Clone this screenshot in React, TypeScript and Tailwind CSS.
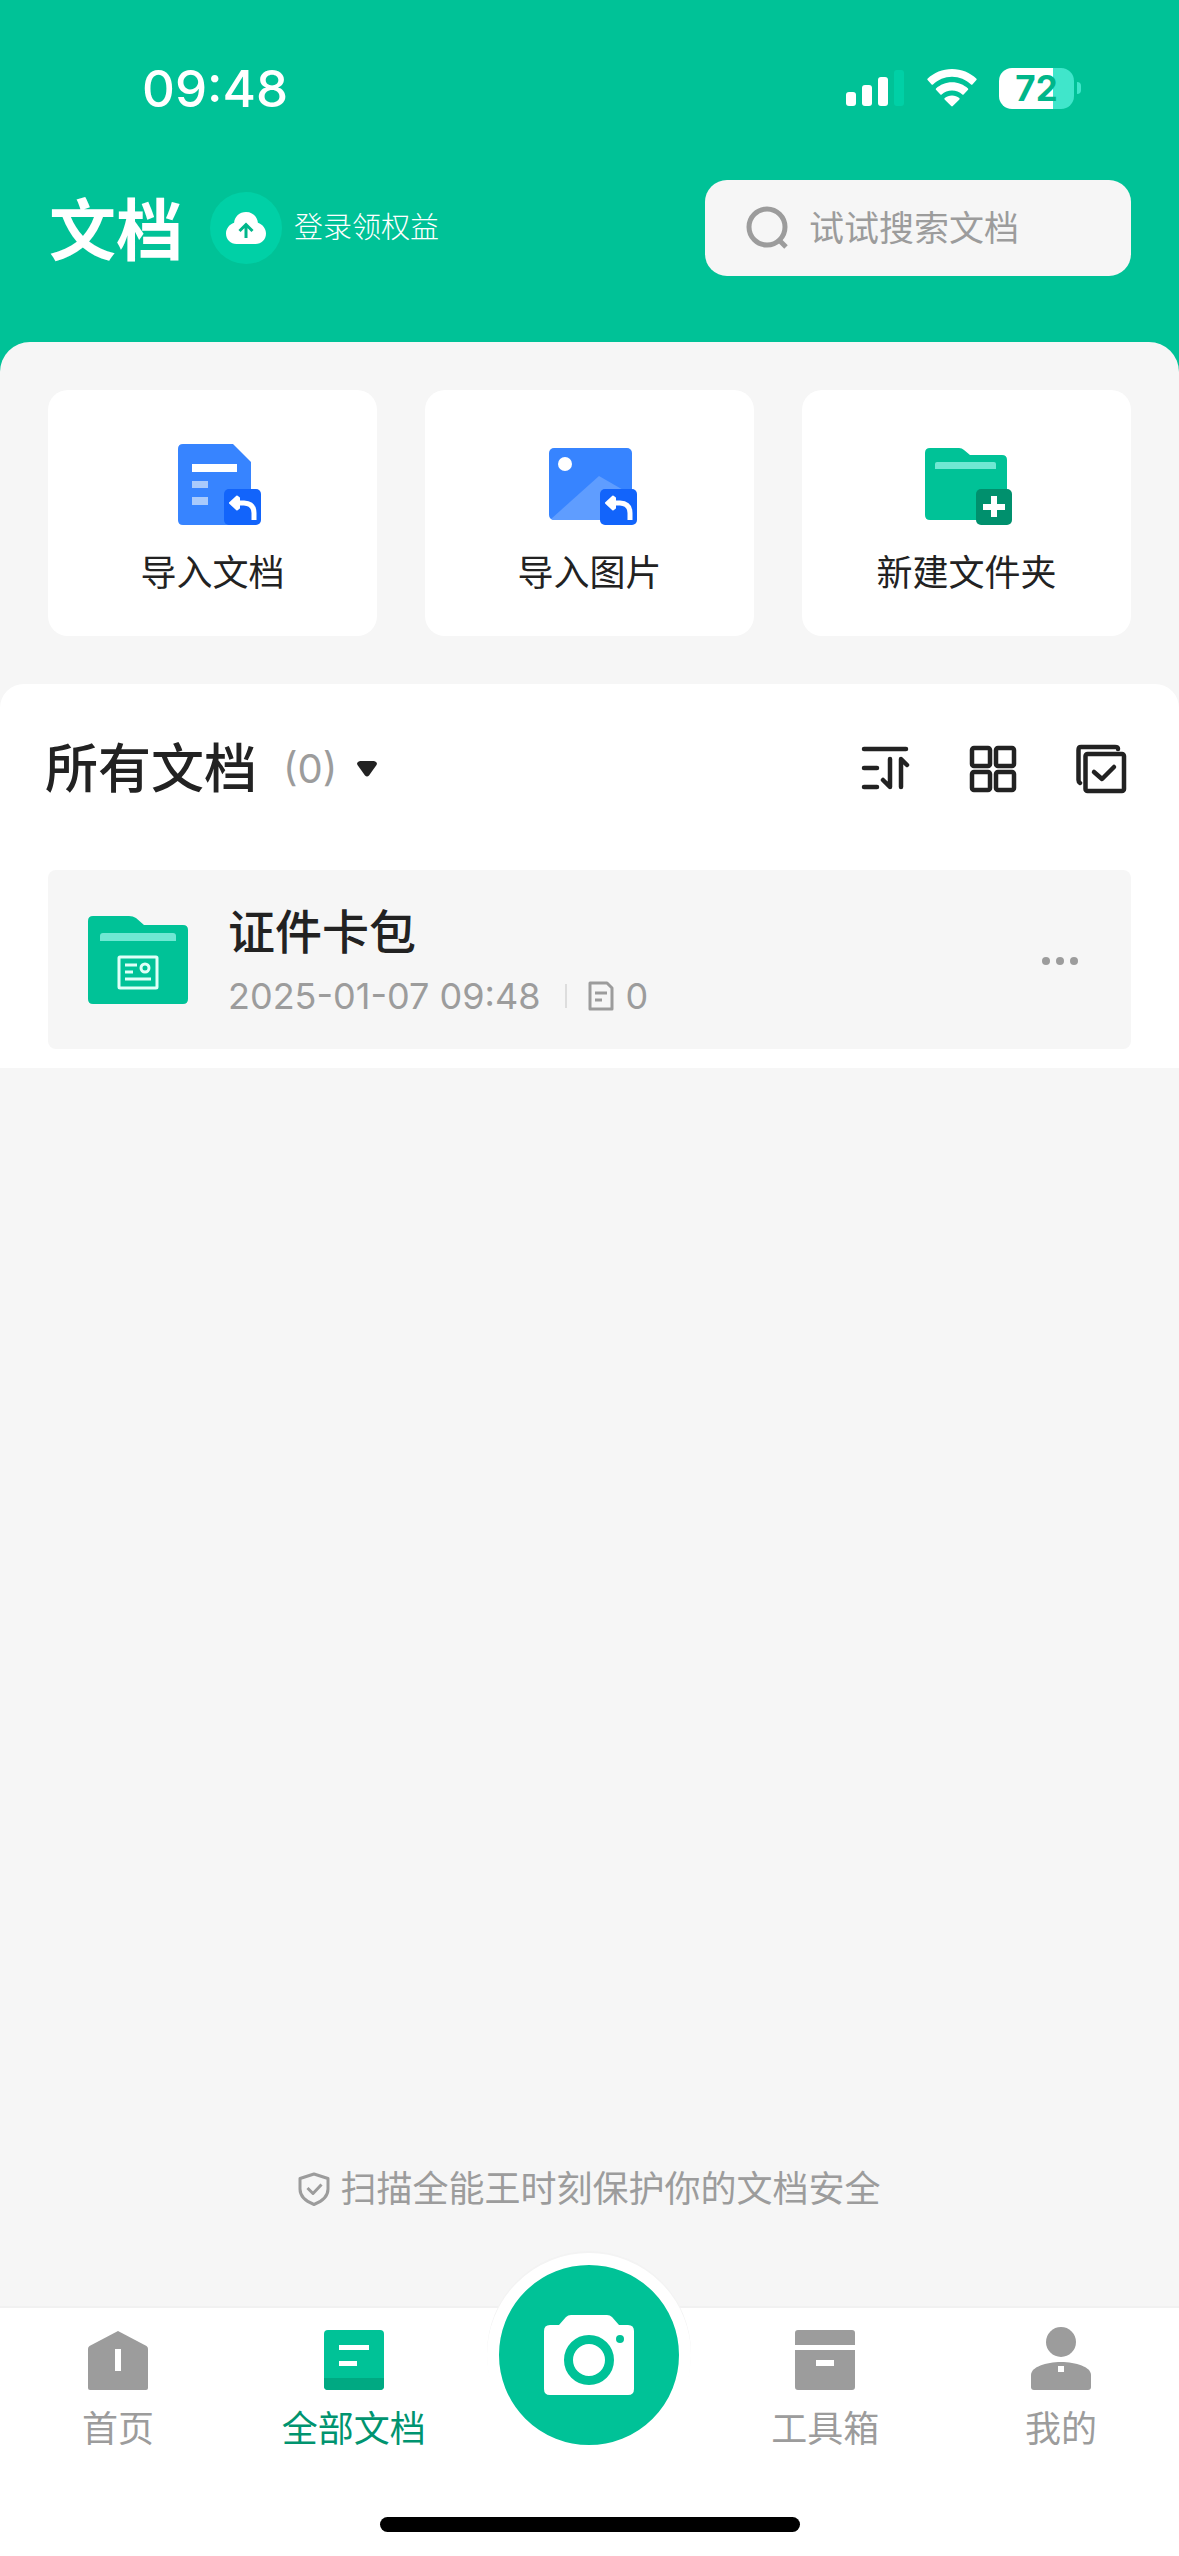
import { ReactNode } from "react";

const StatusBar = () => {
  return (
    <div className="flex h-44 items-center justify-between pl-[142px] pr-[98px]">
      <div className="text-[51px] leading-none font-medium text-white">09:48</div>
      <div className="flex items-center">
        <svg className="h-10 w-[60px]" viewBox="0 0 60 40" fill="#fff">
          <rect x="0" y="24" width="10" height="14" rx="3" />
          <rect x="16" y="17" width="10" height="21" rx="3" />
          <rect x="32" y="9" width="10" height="29" rx="3" />
          <rect x="48" y="2" width="10" height="36" rx="3" fill="#00d0a6" />
        </svg>
        <svg className="ml-[21px] h-10 w-[50px]" viewBox="0 0 50 40" fill="#fff">
          <path d="M25 1C15.500 1 6.900 4.700 .5 10.700Q0 11.400 .6 12L4.600 16.400Q5.300 17 6 16.400C11 11.700 17.700 8.800 25 8.800S39 11.700 44 16.400Q44.700 17 45.400 16.400L49.400 12Q50 11.400 49.500 10.700C43.100 4.700 34.500 1 25 1Z" />
          <path d="M25 14.300C18.800 14.300 13.200 16.700 9 20.500Q8.400 21.200 9 21.800L13.400 26.400Q14 27 14.700 26.400C17.400 24 21 22.400 25 22.400S32.600 24 35.300 26.400Q36 27 36.600 26.400L41 21.800Q41.600 21.200 41 20.500C36.800 16.700 31.200 14.300 25 14.300Z" />
          <path d="M25 27.400C22.200 27.400 19.700 28.400 17.700 30Q17 30.800 17.600 31.400L24.200 38Q25 38.800 25.800 38L32.400 31.400Q33 30.800 32.300 30C30.300 28.400 27.800 27.400 25 27.400Z" />
        </svg>
        <div className="ml-[22px] flex items-center gap-[3px]">
          <div className="flex h-[41px] w-[75px] items-center justify-center rounded-[13px] bg-linear-to-r from-white from-72% to-[#40e6cb] to-72% text-[35px] leading-none font-bold text-[#00b68a]">
            72
          </div>
          <div className="h-3 w-1 rounded-r-full bg-[#40e6cb]" />
        </div>
      </div>
    </div>
  );
};

const Header = () => {
  return (
    <header className="pb-[62px]">
      <StatusBar />
      <div className="flex h-[104px] items-center justify-between pr-12 pl-[49px]">
        <div className="flex items-center">
          <h1 className="pt-1 text-[67px] leading-none font-bold text-white">文档</h1>
          <a href="#login" className="ml-[27px] flex items-center gap-3 text-[29px] font-light text-white">
            <span className="flex size-[72px] items-center justify-center rounded-full bg-[#00d0a6]">
              <svg className="h-8 w-10" viewBox="0 0 40 32">
                <path
                  fill="#fff"
                  d="M20 0C13.500 0 8.600 4.600 8.100 10.800C3.300 12.400 0 16.700 0 21.500C0 27.400 4.600 32 10.500 32H29.500C35.400 32 40 27.400 40 21.500C40 16.700 36.700 12.400 31.900 10.800C31.400 4.600 26.500 0 20 0Z"
                />
                <path fill="none" stroke="#00b68a" strokeWidth="3" d="M20 26V13M13.500 19L20 12.500L26.500 19" />
              </svg>
            </span>
            登录领权益
          </a>
        </div>
        <label className="flex h-24 w-[426px] items-center rounded-[22px] bg-[#f6f6f6] pl-10">
          <svg className="size-11 shrink-0" viewBox="0 0 44 44" fill="none" stroke="#9c9c9c">
            <circle cx="22" cy="21" r="18" strokeWidth="5" />
            <path d="M34 34L41 41" strokeWidth="5" />
          </svg>
          <input
            type="text"
            aria-label="搜索文档"
            placeholder="试试搜索文档"
            className="ml-5 w-full min-w-0 bg-transparent text-[35px] text-[#222] outline-none placeholder:text-[#9c9c9c]"
          />
        </label>
      </div>
    </header>
  );
};

const ImportBadge = () => {
  return (
    <>
      <rect x="65" y="51" width="37" height="36" rx="5" fill="#1264fb" />
      <path fill="none" stroke="#fff" strokeWidth="5" d="M77 65H85Q95 65.500 95 75V82" />
      <path fill="#fff" stroke="#fff" strokeWidth="2" strokeLinejoin="round" d="M71 65L78 58.500L80 60V70L78 71.500Z" />
    </>
  );
};

const ImportDocIcon = () => {
  return (
    <svg className="h-24 w-[108px]" viewBox="0 0 108 96">
      <path fill="#3784ff" d="M24 6H74L92 24V87H24Q19 87 19 82V11Q19 6 24 6Z" />
      <path fill="#fff" d="M33 26H78V34H33Z" />
      <path fill="#a9cafc" d="M33 43H49V50H33ZM33 59H49V67H33Z" />
      <ImportBadge />
    </svg>
  );
};

const ImportImageIcon = () => {
  return (
    <svg className="h-24 w-[108px]" viewBox="1 0 108 96">
      <rect x="14" y="10" width="83" height="72" rx="5" fill="#3784ff" />
      <path fill="#5f9dff" d="M16 81L64 38L97 57V82H18Z" />
      <circle cx="30" cy="26" r="7" fill="#fff" />
      <ImportBadge />
    </svg>
  );
};

const NewFolderIcon = () => {
  return (
    <svg className="h-24 w-[108px]" viewBox="1 0 108 96">
      <path fill="#00c297" d="M18 10H47Q50 10 52 12L58 17H90Q95 17 95 22V82H18Q13 82 13 77V15Q13 10 18 10Z" />
      <path fill="#6fe8d3" d="M25 24H82Q84 24 84 26V31H23V26Q23 24 25 24Z" />
      <rect x="64" y="51" width="36" height="36" rx="5" fill="#00906d" />
      <path fill="none" stroke="#fff" strokeWidth="6" d="M82 58V79M71 69H93" />
    </svg>
  );
};

const QuickAction = ({ icon, label }: { icon: ReactNode; label: string }) => {
  return (
    <button className="flex h-[246px] flex-col items-center gap-3 rounded-[20px] bg-white pt-12 text-[36px] leading-[54px] text-[#222]">
      {icon}
      {label}
    </button>
  );
};

const ListToolbar = () => {
  return (
    <div className="flex h-[170px] items-center justify-between pr-[51px] pl-[45px]">
      <button className="flex items-center text-[#222]">
        <h2 className="text-[53px] leading-none font-medium">所有文档</h2>
        <span className="ml-[26px] text-[40px] text-[#9c9c9c]">(0)</span>
        <svg className="ml-5 h-4 w-5" viewBox="0 0 20 16">
          <path fill="#222" d="M3 0H17Q21 1 19.500 4L12 14.500Q10 16.500 8 14.500L.5 4Q-1 1 3 0Z" />
        </svg>
      </button>
      <div className="flex items-center gap-[58px]">
        <button aria-label="排序">
          <svg className="size-[50px]" viewBox="0 0 50 50" fill="none" stroke="#222" strokeWidth="4.500" strokeLinecap="round" strokeLinejoin="round">
            <path d="M4 5H46M4 24H17M4 43H17M30 15V43L23 36M41 43V15L47 21" />
          </svg>
        </button>
        <button aria-label="网格视图">
          <svg className="size-[50px]" viewBox="0 0 50 50" fill="none" stroke="#222" strokeWidth="4.500">
            <rect x="4" y="4" width="18" height="18" rx="2" />
            <rect x="28" y="4" width="18" height="18" rx="2" />
            <rect x="4" y="28" width="18" height="18" rx="2" />
            <rect x="28" y="28" width="18" height="18" rx="2" />
          </svg>
        </button>
        <button aria-label="选择">
          <svg className="h-[50px] w-[52px]" viewBox="1 0 52 50" fill="none" stroke="#222" strokeWidth="4.500" strokeLinecap="round">
            <path d="M5 39Q3.500 38 3.500 36V6Q3.500 3 6 3H40Q43 3 43 5" />
            <rect x="10.500" y="10" width="38.500" height="37" rx="2" />
            <path strokeLinejoin="round" d="M19 28L27 35L39 23" />
          </svg>
        </button>
      </div>
    </div>
  );
};

const CardFolderIcon = () => {
  return (
    <svg className="h-[88px] w-[100px]" viewBox="0 0 100 88">
      <path fill="#00c297" d="M5 0H41Q45 0 48 2L56 9H95Q100 9 100 14V83Q100 88 95 88H5Q0 88 0 83V5Q0 0 5 0Z" />
      <path fill="#6fe8d3" d="M15 17H85Q88 17 88 20V25H12V20Q12 17 15 17Z" />
      <rect x="31" y="41" width="38" height="31" rx="1" fill="none" stroke="#dffff8" strokeWidth="3" />
      <path fill="none" stroke="#dffff8" strokeWidth="3" d="M37 49H49M37 56H45M37 63H63" />
      <circle cx="57" cy="52" r="4" fill="none" stroke="#dffff8" strokeWidth="3" />
    </svg>
  );
};

const FolderRow = () => {
  return (
    <div className="mx-12 flex h-[179px] items-center gap-10 rounded-lg bg-[#f6f6f6] pr-[43px] pl-10">
      <CardFolderIcon />
      <div className="flex flex-1 flex-col pt-1">
        <h3 className="text-[47px] leading-[68px] font-medium text-[#222]">证件卡包</h3>
        <div className="flex items-center text-[36px] leading-[60px] text-[#9c9c9c]">
          <span>2025-01-07 09:48</span>
          <span className="mr-5 ml-[25px] h-6 w-0.5 bg-[#ddd]" />
          <svg className="mr-2.5 h-8 w-7" viewBox="0 0 28 32" fill="none" stroke="#9c9c9c" strokeWidth="3">
            <path strokeLinejoin="round" d="M3 3H20L25 8V29H3Z" />
            <path d="M8 13H20M8 20H15" />
          </svg>
          <span>0</span>
        </div>
      </div>
      <button aria-label="更多">
        <svg className="h-10 w-14" viewBox="0 0 56 40" fill="#9c9c9c">
          <circle cx="14" cy="21" r="4" />
          <circle cx="28" cy="21" r="4" />
          <circle cx="42" cy="21" r="4" />
        </svg>
      </button>
    </div>
  );
};

const NavItem = ({ icon, label, active }: { icon: ReactNode; label: string; active?: boolean }) => {
  return (
    <a
      href="#"
      className={`flex flex-col items-center gap-3 pt-[22px] text-[36px] leading-[54px] ${active ? "text-[#00946f]" : "text-[#9c9c9c]"}`}
    >
      {icon}
      {label}
    </a>
  );
};

const BottomNav = () => {
  return (
    <nav className="border-t-2 border-[#f1f1f1] bg-white">
      <div className="grid h-[209px] grid-cols-5">
        <NavItem
          label="首页"
          icon={
            <svg className="size-[60px]" viewBox="0 0 60 60">
              <path fill="#9c9c9c" d="M30 1L58.500 16Q60 17 60 19V58Q60 60 58 60H2Q0 60 0 58V19Q0 17 1.500 16Z" />
              <path fill="#fff" d="M27 19H33V41H27Z" />
            </svg>
          }
        />
        <NavItem
          active
          label="全部文档"
          icon={
            <svg className="size-[60px]" viewBox="0 0 60 60">
              <rect width="60" height="60" rx="4" fill="#00c297" />
              <path fill="#00a982" d="M0 48H60V56Q60 60 56 60H4Q0 60 0 56Z" />
              <path fill="#fff" d="M15 15H45V20H15ZM15 31H33V36H15Z" />
            </svg>
          }
        />
        <div className="flex justify-center">
          <button
            aria-label="拍照扫描"
            className="relative -mt-[55px] flex size-[204px] shrink-0 items-center justify-center rounded-full border-12 border-white bg-[#00c297] shadow-[0_-2px_0_#f3f3f3]"
          >
            <svg className="h-20 w-[90px]" viewBox="0 0 90 80">
              <path fill="#fff" d="M6 10H15L22 2Q24 0 27 0H63Q66 0 68 2L75 10H84Q90 10 90 16V74Q90 80 84 80H6Q0 80 0 74V16Q0 10 6 10Z" />
              <circle cx="45" cy="45" r="20.500" fill="none" stroke="#00c297" strokeWidth="9" />
              <circle cx="76" cy="24" r="4" fill="#00c297" />
            </svg>
          </button>
        </div>
        <NavItem
          label="工具箱"
          icon={
            <svg className="size-[60px]" viewBox="0 0 60 60">
              <path fill="#9c9c9c" d="M3 0H57Q60 0 60 3V15H0V3Q0 0 3 0ZM0 20H60V57Q60 60 57 60H3Q0 60 0 57Z" />
              <path fill="#fff" d="M21 30H39V36H21Z" />
            </svg>
          }
        />
        <NavItem
          label="我的"
          icon={
            <svg className="size-[60px] overflow-visible" viewBox="0 0 60 60">
              <circle cx="30" cy="12" r="15" fill="#9c9c9c" />
              <path fill="#9c9c9c" d="M0 45C0 37 15 32 30 32S60 37 60 45V57Q60 60 57 60H3Q0 60 0 57Z" />
              <path fill="#fff" d="M27 36H33V42H27Z" />
            </svg>
          }
        />
      </div>
      <div className="mx-auto mb-6 h-[15px] w-[420px] rounded-full bg-black" />
    </nav>
  );
};

const App = () => {
  return (
    <div className="flex min-h-screen flex-col bg-[#00c297] font-['Inter','Noto_Sans_CJK_SC',sans-serif]">
      <Header />
      <main className="flex flex-1 flex-col rounded-t-[30px] bg-[#f6f6f6]">
        <section className="grid grid-cols-3 gap-12 p-12">
          <QuickAction icon={<ImportDocIcon />} label="导入文档" />
          <QuickAction icon={<ImportImageIcon />} label="导入图片" />
          <QuickAction icon={<NewFolderIcon />} label="新建文件夹" />
        </section>
        <section className="rounded-t-3xl bg-white pb-[19px]">
          <ListToolbar />
          <div className="pt-4">
            <FolderRow />
          </div>
        </section>
        <p className="mt-auto mb-[92px] flex items-center justify-center gap-2.5 text-[36px] leading-[50px] text-[#9c9c9c]">
          <svg className="h-[34px] w-8" viewBox="0 0 32 34" fill="none" stroke="#9c9c9c" strokeWidth="3" strokeLinejoin="round">
            <path d="M16 2L30 6.500V17C30 24 25 29 16 32.500C7 29 2 24 2 17V6.500Z" />
            <path d="M9.500 16L15 21.500L23.500 12.500" />
          </svg>
          扫描全能王时刻保护你的文档安全
        </p>
      </main>
      <BottomNav />
    </div>
  );
};

export default App;
